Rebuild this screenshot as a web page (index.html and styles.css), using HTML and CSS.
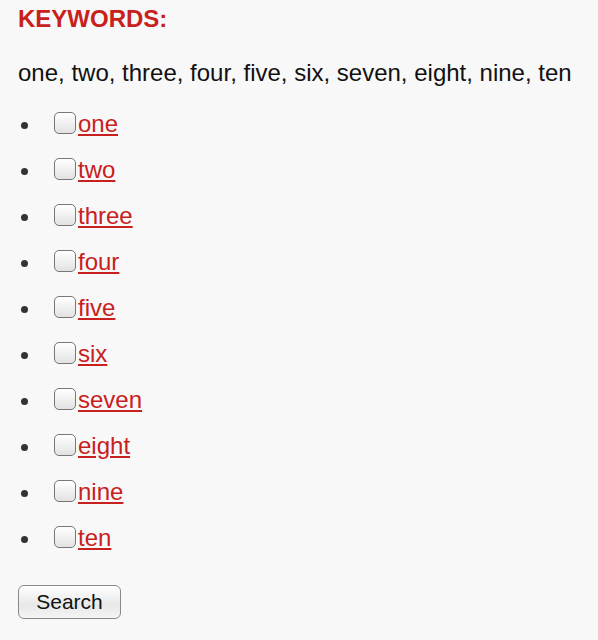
FILE: index.html
```html
<!DOCTYPE html>
<html>
<head>
<meta charset="utf-8">
<link rel="stylesheet" href="styles.css">
</head>
<body>
<form class="kw">
  <h2 class="kw-title">KEYWORDS:</h2>
  <p class="kw-text">one, two, three, four, five, six, seven, eight, nine, ten</p>
  <ul class="kw-list">
    <li class="kw-item"><span class="box"></span><a href="#">one</a></li>
    <li class="kw-item"><span class="box"></span><a href="#">two</a></li>
    <li class="kw-item"><span class="box"></span><a href="#">three</a></li>
    <li class="kw-item"><span class="box"></span><a href="#">four</a></li>
    <li class="kw-item"><span class="box"></span><a href="#">five</a></li>
    <li class="kw-item"><span class="box"></span><a href="#">six</a></li>
    <li class="kw-item"><span class="box"></span><a href="#">seven</a></li>
    <li class="kw-item"><span class="box"></span><a href="#">eight</a></li>
    <li class="kw-item"><span class="box"></span><a href="#">nine</a></li>
    <li class="kw-item"><span class="box"></span><a href="#">ten</a></li>
  </ul>
  <button type="button" class="btn">Search</button>
</form>
</body>
</html>
```
FILE: styles.css
```css
html, body {
  margin: 0;
  background: #f8f8f8;
}
body {
  font-family: "Liberation Sans", Arial, sans-serif;
  color: #111;
}
.kw {
  padding: 5px 18px 0 18px;
}
.kw-title {
  margin: 0;
  font-size: 24px;
  line-height: 28px;
  font-weight: bold;
  color: #c8201c;
}
.kw-text {
  margin: 26px 0 0 0;
  font-size: 24px;
  line-height: 28px;
}
.kw-list {
  list-style: none;
  margin: 14px 0 0 0;
  padding: 0;
}
.kw-item {
  display: flex;
  align-items: center;
  height: 46px;
  font-size: 24px;
}
.kw-item::before {
  content: "";
  width: 7px;
  height: 7px;
  border-radius: 50%;
  background: #333;
  margin: 2px 26px 0 3px;
}
.box {
  width: 22px;
  height: 22px;
  border: 1px solid #777;
  border-radius: 5px;
  background: linear-gradient(#ffffff, #e2e2e2);
  box-sizing: border-box;
  margin-top: -3px;
  flex: none;
}
.kw-item a {
  color: #c8201c;
  text-decoration: underline;
  margin-left: 2px;
}
.btn {
  margin-top: 24px;
  width: 103px;
  height: 34px;
  font-family: "Liberation Sans", Arial, sans-serif;
  font-size: 21px;
  color: #111;
  border: 1px solid #888;
  border-radius: 6px;
  background: linear-gradient(#ffffff, #e8e8e8 60%, #f4f4f4);
  padding: 0;
}
```
